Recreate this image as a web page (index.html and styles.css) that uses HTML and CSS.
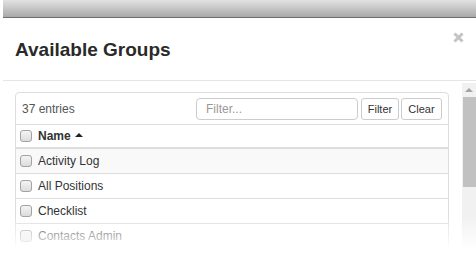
FILE: index.html
```html
<!DOCTYPE html>
<html lang="en">
<head>
  <meta charset="UTF-8">
  <title>Available Groups</title>
  <link rel="stylesheet" href="styles.css">
</head>
<body>
  <div class="page">
    <div class="backdrop"></div>

    <div class="modal">
      <div class="modal-header">
        <h2>Available Groups</h2>
        <button class="close" title="Close">
          <svg width="11" height="11" viewBox="0 0 11 11"><path d="M1.5 1.5l8 8M9.5 1.5l-8 8" stroke="#c4c4c4" stroke-width="3"/></svg>
        </button>
      </div>

      <div class="modal-body">
        <div class="content">
          <div class="panel">
            <div class="toolbar">
              <span class="count">37 entries</span>
              <input class="filter" placeholder="Filter..." />
              <button class="btn btn-filter">Filter</button>
              <button class="btn btn-clear">Clear</button>
            </div>
            <table class="groups">
              <thead>
                <tr><th class="chk"><input type="checkbox" /></th><th>Name <span class="caret"></span></th></tr>
              </thead>
              <tbody>
                <tr class="odd"><td class="chk"><input type="checkbox" /></td><td>Activity Log</td></tr>
                <tr><td class="chk"><input type="checkbox" /></td><td>All Positions</td></tr>
                <tr><td class="chk"><input type="checkbox" /></td><td>Checklist</td></tr>
                <tr><td class="chk"><input type="checkbox" /></td><td>Contacts Admin</td></tr>
              </tbody>
            </table>
          </div>
        </div>

        <div class="scrollbar">
          <div class="arrow"></div>
          <div class="thumb"></div>
        </div>
      </div>

      <!-- fade at the bottom of the shot -->
      <div class="fade"></div>
    </div>
  </div>
</body>
</html>
```

FILE: styles.css
```css
html, body { margin: 0; height: 100%; overflow: hidden; background: #fff; }
body { font-family: "Liberation Sans", Arial, sans-serif; color: #333; }

.page { padding-left: 3px; height: 258px; }

.backdrop {
  height: 17px;
  background: linear-gradient(#e2e2e2, #a9a9a9);
  border-bottom: 1px solid #6f6f6f;
}

.modal { position: relative; height: 240px; overflow: hidden; background: #fff; }

.modal-header {
  display: flex; align-items: center; justify-content: space-between;
  height: 62px; padding: 0 12px 0 12px;
  border-bottom: 1px solid #e5e5e5;
}
.modal-header h2 { margin: 0; font-size: 19px; font-weight: bold; color: #2a2a2a; padding-top: 1px; }
.close {
  align-self: flex-start; margin-top: 14px;
  background: none; border: none; padding: 0; line-height: 0; cursor: pointer;
}

.modal-body { display: flex; }
.content { flex: 1; padding: 11px 13px 0 12px; }

.panel { border: 1px solid #ddd; border-radius: 4px; }

.toolbar {
  display: flex; align-items: center; gap: 2px;
  height: 31px; padding: 0 6px;
  border-bottom: 1px solid #ddd;
}
.count { flex: 1; font-size: 12px; color: #555; }
.filter {
  width: 162px; height: 22px; box-sizing: border-box; margin-right: 1px;
  border: 1px solid #ccc; border-radius: 4px; padding: 0 9px;
  font-family: inherit; font-size: 12px; color: #555;
}
.filter::placeholder { color: #999; }
.btn {
  height: 22px; box-sizing: border-box; padding: 0;
  background: #fff; border: 1px solid #ccc; border-radius: 3px;
  font-family: inherit; font-size: 11px; color: #333;
}
.btn-filter { width: 38px; }
.btn-clear { width: 41px; }

.groups { width: 100%; border-collapse: collapse; font-size: 12px; }
.groups th, .groups td { height: 24px; padding: 0; text-align: left; vertical-align: middle; }
.groups thead th { height: 22px; border-bottom: 2px solid #ddd; font-weight: bold; }
.groups tbody td { border-bottom: 1px solid #ddd; }
.groups tr.odd td { background: #f9f9f9; }
.groups .chk { width: 18px; padding-left: 4px; }

.groups input[type=checkbox] {
  appearance: none; -webkit-appearance: none;
  display: block; width: 12px; height: 12px; margin: 0; box-sizing: border-box;
  border: 1px solid #a3a3a3; border-radius: 3px;
  background: linear-gradient(#f4f4f4, #dcdcdc);
}

.caret {
  display: inline-block; vertical-align: 3px; margin-left: 1px;
  border-left: 4px solid transparent; border-right: 4px solid transparent;
  border-bottom: 4px solid #222;
}

.scrollbar { width: 14px; margin-top: 2px; background: #f1f1f1; height: 200px; }
.arrow {
  width: 0; height: 0; margin: 5px auto 0;
  border-left: 4px solid transparent; border-right: 4px solid transparent;
  border-bottom: 4px solid #a3a3a3;
}
.thumb { height: 90px; margin: 5px 0 0 1px; background: #c1c1c1; }

.fade {
  position: absolute; left: 0; right: 0; bottom: 0; height: 40px;
  background: linear-gradient(rgba(255,255,255,0.1), rgba(255,255,255,0.55) 40%, #fff 78%);
}
```
